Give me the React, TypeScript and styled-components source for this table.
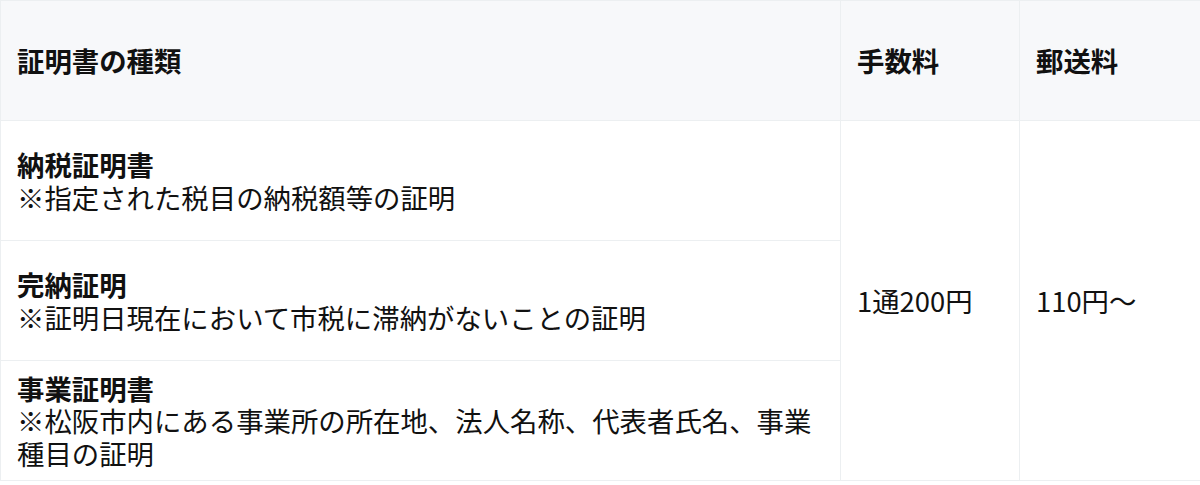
import React from "react";
import styled, { createGlobalStyle } from "styled-components";

const Global = createGlobalStyle`
  html, body { margin: 0; padding: 0; background: #ffffff; }
  body { font-family: "Noto Sans CJK JP", "Noto Sans", sans-serif; color: #111111; }
`;

const Table = styled.table`
  border-collapse: collapse;
  width: 1200px;
  table-layout: fixed;
  font-size: 27.4px;
  line-height: 32.5px;
`;

const Col = styled.col<{ $w: number }>`
  width: ${(p) => p.$w}px;
`;

const Th = styled.th`
  background: #f7f8fa;
  border: 1px solid #eceff1;
  height: 119px;
  padding: 0 16px;
  text-align: left;
  vertical-align: middle;
  font-weight: 700;
`;

const Td = styled.td`
  border: 1px solid #eceff1;
  height: 119px;
  padding: 0 16px;
  text-align: left;
  vertical-align: middle;
  font-weight: 400;
`;

const Title = styled.div`
  font-weight: 700;
`;

const Note = styled.div`
  font-weight: 400;
`;

const rows = [
  { title: "納税証明書", note: "※指定された税目の納税額等の証明" },
  { title: "完納証明", note: "※証明日現在において市税に滞納がないことの証明" },
  {
    title: "事業証明書",
    note: "※松阪市内にある事業所の所在地、法人名称、代表者氏名、事業種目の証明",
  },
];

export default function App() {
  return (
    <>
      <Global />
      <Table>
        <colgroup>
          <Col $w={840} />
          <Col $w={179} />
          <Col $w={181} />
        </colgroup>
        <thead>
          <tr>
            <Th>証明書の種類</Th>
            <Th>手数料</Th>
            <Th>郵送料</Th>
          </tr>
        </thead>
        <tbody>
          {rows.map((r, i) => (
            <tr key={r.title}>
              <Td>
                <Title>{r.title}</Title>
                <Note>{r.note}</Note>
              </Td>
              {i === 0 && (
                <>
                  <Td rowSpan={3}>1通200円</Td>
                  <Td rowSpan={3}>110円～</Td>
                </>
              )}
            </tr>
          ))}
        </tbody>
      </Table>
    </>
  );
}
